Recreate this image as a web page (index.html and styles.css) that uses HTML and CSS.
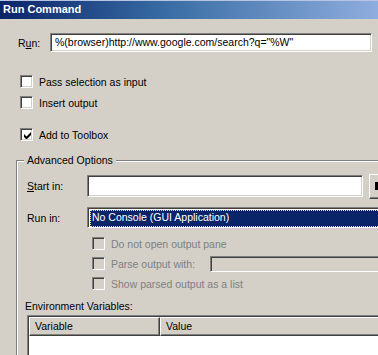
FILE: index.html
```html
<!DOCTYPE html>
<html lang="en">
<head>
    <meta charset="UTF-8">
    <title>Run Command</title>
    <link rel="stylesheet" href="styles.css">
</head>
<body>
    <div class="window">
        <div class="titlebar">Run Command</div>
        <div class="content">
            <div class="run-row">
                <label class="run-label">R<u>u</u>n:</label>
                <div class="field run-field">%(browser)http://www.google.com/search?q="%W"</div>
            </div>

            <div class="check check-first">
                <span class="box"></span>
                <span>Pass selection as input</span>
            </div>
            <div class="check check-second">
                <span class="box"></span>
                <span>Insert output</span>
            </div>
            <div class="check check-toolbox">
                <span class="box">
                    <svg width="7" height="7" viewBox="0 0 7 7"><path d="M0 2v3l2 2h1l4-4V0L2.5 4.5z" fill="#000"/></svg>
                </span>
                <span>Add to Toolbox</span>
            </div>

            <div class="group">
                <div class="legend">Advanced Options</div>
                <div class="form-row start-row">
                    <label class="form-label"><u>S</u>tart in:</label>
                    <div class="field start-field"></div>
                    <div class="browse-btn"><span class="arrow"></span></div>
                </div>
                <div class="form-row runin-row">
                    <label class="form-label">Run in:</label>
                    <div class="select">
                        <div class="select-value">No Console (GUI Application)</div>
                    </div>
                </div>

                <div class="disabled-checks">
                    <div class="check off">
                        <span class="box"></span>
                        <span>Do not open output pane</span>
                    </div>
                    <div class="check off parse-row">
                        <span class="box"></span>
                        <span class="parse-label">Parse output with:</span>
                        <div class="field parse-field"></div>
                    </div>
                    <div class="check off">
                        <span class="box"></span>
                        <span>Show parsed output as a list</span>
                    </div>
                </div>

                <div class="env-label">Environment Variables:</div>
                <div class="listview">
                    <div class="list-header">
                        <div class="col col-var">Variable</div>
                        <div class="col col-val">Value</div>
                    </div>
                    <div class="list-body"></div>
                </div>
            </div>
        </div>
    </div>
</body>
</html>
```
FILE: styles.css
```css
* {
    margin: 0;
    padding: 0;
    box-sizing: border-box;
}

body {
    background: #d4d0c8;
    font-family: "Liberation Sans", Arial, sans-serif;
    font-size: 10.5px;
    color: #000;
}

.window {
    width: 378px;
    height: 355px;
    overflow: hidden;
    background: #d4d0c8;
}

.titlebar {
    height: 19px;
    background: linear-gradient(to right, #0a246a 0%, #3a6ea5 45%, #8fadde 100%);
    border-top: 1px solid #b8c4e0;
    color: #fff;
    font-weight: bold;
    font-size: 11px;
    line-height: 17px;
    padding-left: 3px;
}

.content {
    padding-left: 18px;
}

/* sunken edit box */
.field {
    background: #fff;
    border: 1px solid;
    border-color: #808080 #fff #fff #808080;
    box-shadow: inset 1px 1px 0 #404040, inset -1px -1px 0 #d4d0c8;
}

.run-row {
    display: flex;
    align-items: center;
    margin-top: 14px;
    height: 19px;
}

.run-label {
    width: 32px;
}

.run-field {
    width: 322px;
    height: 19px;
    line-height: 17px;
    padding-left: 4px;
    white-space: nowrap;
    overflow: hidden;
}

.check {
    display: flex;
    align-items: center;
    height: 13px;
    padding-left: 2px;
    gap: 6px;
    white-space: nowrap;
}

.check-first {
    margin-top: 23px;
}

.check-second {
    margin-top: 8px;
}

.check-toolbox {
    margin-top: 19px;
}

.box {
    width: 13px;
    height: 13px;
    flex: none;
    background: #fff;
    border: 1px solid;
    border-color: #808080 #fff #fff #808080;
    box-shadow: inset 1px 1px 0 #404040, inset -1px -1px 0 #d4d0c8;
    display: flex;
    align-items: center;
    justify-content: center;
    padding: 1px 0 0 1px;
}

.group {
    margin-top: 19px;
    margin-left: -2px;
    border-top: 1px solid #808080;
    border-left: 1px solid #808080;
    box-shadow: inset 1px 1px 0 #fff;
    height: 300px;
    padding-left: 10px;
}

.legend {
    width: fit-content;
    margin-top: -7px;
    margin-left: -3px;
    padding: 0 3px;
    background: #d4d0c8;
    line-height: 13px;
    height: 13px;
}

.form-row {
    display: flex;
    align-items: center;
}

.form-label {
    width: 60px;
    flex: none;
}

.start-row {
    margin-top: 8px;
    height: 22px;
}

.start-field {
    width: 276px;
    height: 22px;
    flex: none;
}

.browse-btn {
    margin-left: 6px;
    width: 24px;
    height: 25px;
    flex: none;
    border: 1px solid;
    border-color: #fff #404040 #404040 #fff;
    box-shadow: inset -1px -1px 0 #808080;
    display: flex;
    align-items: center;
    padding-left: 5px;
}

.arrow {
    width: 3px;
    height: 8px;
    background: #000;
}

.runin-row {
    margin-top: 10px;
    height: 21px;
}

.select {
    width: 320px;
    height: 21px;
    flex: none;
    background: #fff;
    border: 1px solid;
    border-color: #808080 #fff #fff #808080;
    box-shadow: inset 1px 1px 0 #404040;
    padding: 2px 0 0 2px;
}

.select-value {
    height: 17px;
    background: #0a246a;
    color: #fff;
    line-height: 15px;
    padding-left: 2px;
    outline: 1px dotted #f0e68c;
    outline-offset: -1px;
    white-space: nowrap;
}

.disabled-checks {
    margin-top: 9px;
    padding-left: 63px;
}

.check.off {
    color: #808080;
    margin-bottom: 7px;
}

.check.off .box {
    background: #d4d0c8;
}

.parse-label {
    margin-right: 9px;
}

.parse-field {
    width: 200px;
    height: 16px;
    flex: none;
    background: #d4d0c8;
}

.env-label {
    margin-top: 10px;
    margin-left: -2px;
}

.listview {
    margin-top: 3px;
    width: 360px;
    height: 60px;
    background: #fff;
    border: 1px solid;
    border-color: #808080 #fff #fff #808080;
    box-shadow: inset 1px 1px 0 #404040;
    padding: 1px 0 0 1px;
}

.list-header {
    display: flex;
    height: 19px;
}

.col {
    height: 19px;
    background: #d4d0c8;
    border: 1px solid;
    border-color: #fff #404040 #404040 #fff;
    box-shadow: inset -1px -1px 0 #808080;
    line-height: 16px;
    padding-left: 5px;
}

.col-var {
    width: 131px;
}

.col-val {
    flex: 1;
}
```
